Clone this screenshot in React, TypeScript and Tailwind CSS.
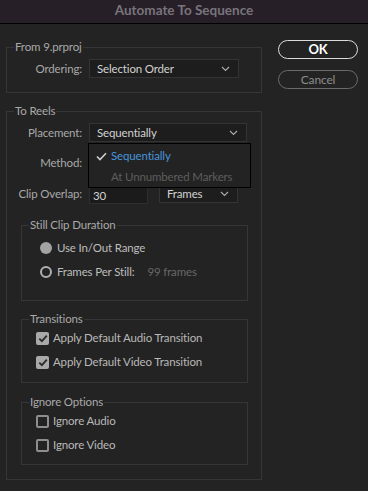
import React from "react";

const Chevron = () => (
  <svg width="9" height="6" viewBox="0 0 9 6" className="shrink-0">
    <path d="M1 1l3.5 3.5L8 1" fill="none" stroke="#a8a8a8" strokeWidth="1.2" />
  </svg>
);

const Select = ({ value, width }: { value: string; width: string }) => (
  <div
    className={`${width} h-[19px] flex items-center justify-between pl-[7px] pr-[8px] bg-[#1d1d1d] border border-[#343434] text-[#d2d2d2]`}
  >
    <span>{value}</span>
    <Chevron />
  </div>
);

const Row = ({ label, children }: { label: string; children: React.ReactNode }) => (
  <div className="flex items-center">
    <div className="w-[76px] text-right pr-[1px] text-[#a9a9a9]">{label}</div>
    <div className="ml-[6px] flex items-center">{children}</div>
  </div>
);

const Check = ({ checked, label }: { checked: boolean; label: string }) => (
  <div className="flex items-center h-[16px]">
    {checked ? (
      <div className="w-[13px] h-[13px] rounded-[2px] bg-[#a9a9a9] flex items-center justify-center">
        <svg width="10" height="9" viewBox="0 0 10 9">
          <path d="M1.3 4.6l2.6 2.6L8.8 1.6" fill="none" stroke="#2a2a2a" strokeWidth="1.8" />
        </svg>
      </div>
    ) : (
      <div className="w-[13px] h-[13px] rounded-[2px] border-2 border-[#8e8e8e]" />
    )}
    <span className="ml-[4px] text-[#b9b9b9]">{label}</span>
  </div>
);

const App: React.FC = () => {
  return (
    <div
      className="w-[368px] h-[491px] bg-[#232323] text-[11.5px] leading-[16px] tracking-[-0.15px] overflow-hidden"
      style={{ fontFamily: "Lato, 'Open Sans', sans-serif" }}
    >
      <div className="h-[24px] bg-[#261f28] border-b border-black flex items-center justify-center">
        <span className="text-[13.5px] font-bold tracking-normal text-[#79747b] -mt-[3px]">Automate To Sequence</span>
      </div>

      <div className="flex pt-[15px]">
        <div className="ml-[6px] w-[256px]">
          {/* From */}
          <fieldset className="border border-[#363636] pb-[14px]">
            <legend className="ml-[7px] px-[1px] text-[#a9a9a9]">From 9.prproj</legend>
            <div className="pt-[4px]">
              <Row label="Ordering:">
                <Select value="Selection Order" width="w-[150px]" />
              </Row>
            </div>
          </fieldset>

          {/* To Reels */}
          <fieldset className="mt-[10px] border border-[#363636] pb-[14px]">
            <legend className="ml-[7px] px-[1px] text-[#a9a9a9]">To Reels</legend>
            <div className="pt-[4px]">
              <div className="relative">
                <Row label="Placement:">
                  <Select value="Sequentially" width="w-[158px]" />
                </Row>
                <div className="absolute left-[81px] top-[20px] w-[163px] h-[45px] bg-[#232323] border border-black z-10">
                  <div className="flex items-center h-[22px] mt-[1px]">
                    <svg width="11" height="9" viewBox="0 0 11 9" className="ml-[7px]">
                      <path d="M1 4.5l3 3L10 1.3" fill="none" stroke="#cfcfcf" strokeWidth="1.6" />
                    </svg>
                    <span className="ml-[4px] text-[#4795dc]">Sequentially</span>
                  </div>
                  <div className="flex items-center h-[20px]">
                    <span className="ml-[22px] text-[#5e5e5e]">At Unnumbered Markers</span>
                  </div>
                </div>
              </div>
              <div className="mt-[11px]">
                <Row label="Method:">
                  <Select value="" width="w-[158px]" />
                </Row>
              </div>
              <div className="mt-[12px]">
                <Row label="Clip Overlap:">
                  <div className="w-[59px] h-[20px] bg-[#1b1b1b] border border-[#2e2e2e] pl-[3px] pt-[3px] text-[#d2d2d2]">
                    30
                  </div>
                  <div className="ml-[11px] -mt-[1px]">
                    <Select value="Frames" width="w-[79px]" />
                  </div>
                </Row>
              </div>

              {/* Still Clip Duration */}
              <fieldset className="mt-[13px] ml-[14px] w-[227px] border border-[#363636] pb-[20px]">
                <legend className="ml-[7px] px-[1px] text-[#a9a9a9]">Still Clip Duration</legend>
                <div className="pl-[18px] pt-[7px]">
                  <div className="flex items-center h-[16px]">
                    <div className="w-[12px] h-[12px] rounded-full bg-[#a3a3a3]" />
                    <span className="ml-[5px] text-[#bdbdbd]">Use In/Out Range</span>
                  </div>
                  <div className="flex items-center h-[16px] mt-[8px]">
                    <div className="w-[12px] h-[12px] rounded-full border-2 border-[#b0b0b0]" />
                    <span className="ml-[5px] text-[#bdbdbd]">Frames Per Still:</span>
                    <span className="ml-[13px] text-[#686868]">99 frames</span>
                  </div>
                </div>
              </fieldset>

              {/* Transitions */}
              <fieldset className="mt-[10px] ml-[14px] w-[227px] border border-[#363636] pb-[12px]">
                <legend className="ml-[7px] px-[1px] text-[#a9a9a9]">Transitions</legend>
                <div className="pl-[14px] pt-[3px] flex flex-col gap-[8px]">
                  <Check checked label="Apply Default Audio Transition" />
                  <Check checked label="Apply Default Video Transition" />
                </div>
              </fieldset>

              {/* Ignore Options */}
              <fieldset className="mt-[11px] ml-[14px] w-[227px] border border-[#363636] pb-[11px]">
                <legend className="ml-[7px] px-[1px] text-[#a9a9a9]">Ignore Options</legend>
                <div className="pl-[14px] pt-[3px] flex flex-col gap-[8px]">
                  <Check checked={false} label="Ignore Audio" />
                  <Check checked={false} label="Ignore Video" />
                </div>
              </fieldset>
            </div>
          </fieldset>
        </div>

        <div className="ml-[16px] w-[80px] pt-[1px] flex flex-col gap-[11px]">
          <button className="h-[19px] rounded-full border-[1.5px] border-[#dcdcdc] text-white font-bold text-[13px] leading-none">
            OK
          </button>
          <button className="h-[19px] rounded-full border-[1.5px] border-[#6a6a6a] text-[#8c8c8c] text-[12px] leading-none">
            Cancel
          </button>
        </div>
      </div>
    </div>
  );
};

export default App;
